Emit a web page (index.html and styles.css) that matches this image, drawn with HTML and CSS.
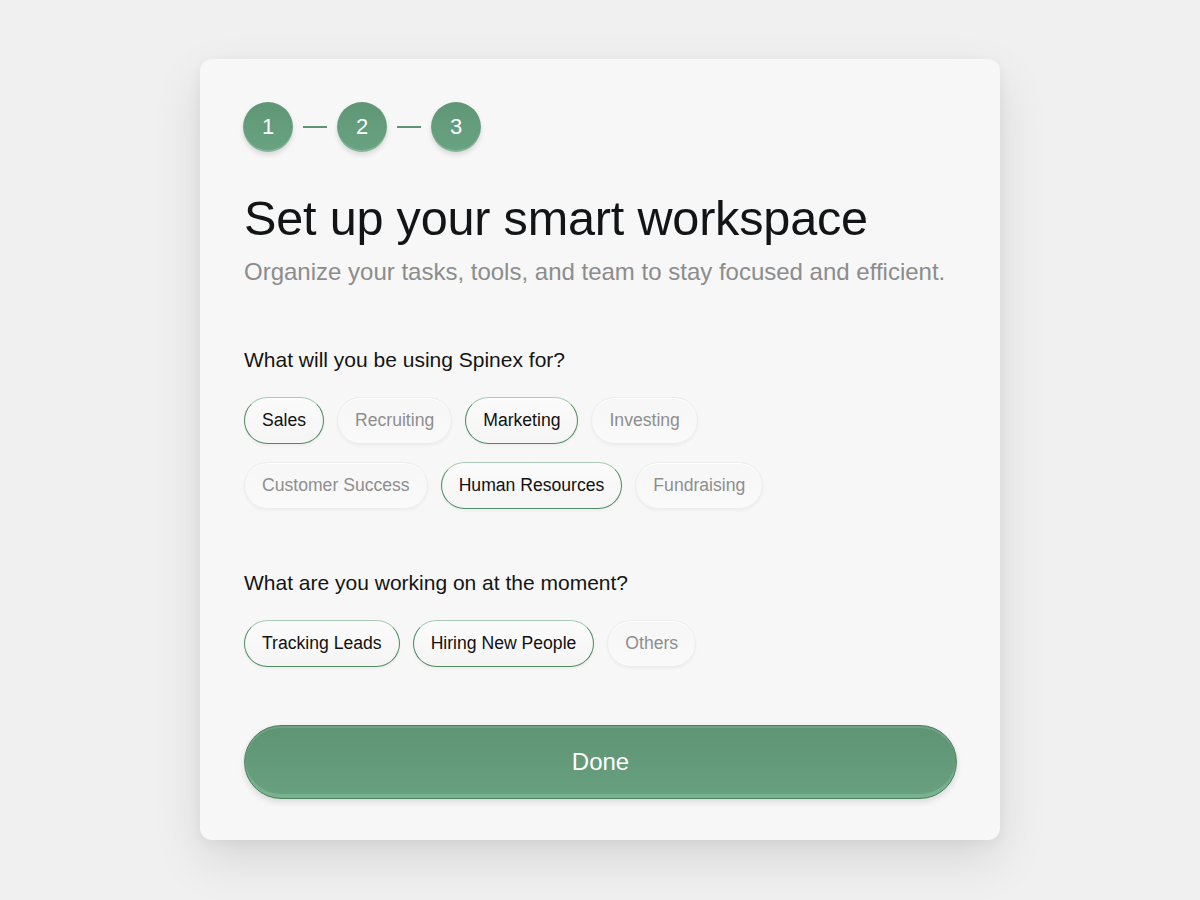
FILE: index.html
```html
<!DOCTYPE html>
<html>
<head>
<meta charset="utf-8">
<title>Workspace setup</title>
<link rel="stylesheet" href="styles.css">
</head>
<body>
<div class="card">
  <div class="steps">
    <span class="step">1</span>
    <span class="step-line"></span>
    <span class="step">2</span>
    <span class="step-line"></span>
    <span class="step">3</span>
  </div>

  <h1 class="title">Set up your smart workspace</h1>
  <p class="subtitle">Organize your tasks, tools, and team to stay focused and efficient.</p>

  <div class="question">
    <div class="question-label">What will you be using Spinex for?</div>
    <div class="chips">
      <span class="chip on">Sales</span>
      <span class="chip">Recruiting</span>
      <span class="chip on">Marketing</span>
      <span class="chip">Investing</span>
      <span class="chip">Customer Success</span>
      <span class="chip on">Human Resources</span>
      <span class="chip">Fundraising</span>
    </div>
  </div>

  <div class="question">
    <div class="question-label">What are you working on at the moment?</div>
    <div class="chips">
      <span class="chip on">Tracking Leads</span>
      <span class="chip on">Hiring New People</span>
      <span class="chip">Others</span>
    </div>
  </div>

  <button class="done">Done</button>
</div>
</body>
</html>
```
FILE: styles.css
```css
/* Onboarding card */

html, body
{ margin: 0;
min-height: 100%;
}

body
{ background-color: #f0f0f0;
font-family: "Liberation Sans", Arial, sans-serif;
padding: 59px 0 60px;
box-sizing: border-box;
min-height: 100vh;
}

div.card
{ width: 800px;
box-sizing: border-box;
margin: 0 auto;
padding: 43px 43px 41px 44px;
background-color: #f7f7f7;
border-radius: 12px;
box-shadow: 0 20px 50px rgba(0,0,0,0.10), 0 4px 14px rgba(0,0,0,0.05);
}

/* Step indicator */

div.steps
{ display: flex;
align-items: center;
gap: 10px;
}

span.step
{ width: 50px; height: 50px;
border-radius: 50%;
display: flex; align-items: center; justify-content: center;
color: #fff;
font-size: 22px;
background: linear-gradient(#5f9676, #69a382);
box-shadow: inset 0 -2px 0 rgba(255,255,255,0.18), 0 3px 5px rgba(0,0,0,0.12);
}

span.step:first-child
{ margin-left: -1px;
}

span.step-line
{ width: 24px; height: 2px;
background-color: #5e9474;
}

h1.title
{ margin: 38px 0 0;
font-size: 48.6px;
font-weight: normal;
color: #121416;
letter-spacing: -0.2px;
}

p.subtitle
{ margin: 12px 0 0;
font-size: 24px;
color: #8c8c8c;
}

/* Questions with their chips */

div.question
{ margin-top: 62px;
}

div.question-label
{ font-size: 21px;
color: #141414;
}

div.chips
{ display: flex;
flex-wrap: wrap;
gap: 18px 13px;
margin-top: 25px;
max-width: 600px;
}

span.chip
{ height: 47px;
box-sizing: border-box;
padding: 0 17px;
display: flex; align-items: center;
border-radius: 24px;
font-size: 17.6px;
color: #8e8e8e;
background: linear-gradient(#f6f6f6, #fafafa);
border: 1px solid #ececec;
box-shadow: 0 2px 3px rgba(0,0,0,0.04), inset 0 1px 0 #fff;
}

span.chip.on
{ color: #111;
border: 1.5px solid #4f8a64;
border-top-color: #a9cbb5;
background: linear-gradient(#fbfbfb, #f5f5f5);
}

/* Submit */

button.done
{ display: block;
width: 100%;
height: 74px;
margin-top: 58px;
border-radius: 37px;
border: 1px solid #4e7f61;
background: linear-gradient(#5e9474, #68a080);
color: #fff;
font-family: inherit;
font-size: 24px;
box-shadow: inset 0 -4px 0 rgba(140,200,160,0.45), inset 0 2px 0 rgba(255,255,255,0.12), 0 3px 6px rgba(0,0,0,0.12);
}
```
